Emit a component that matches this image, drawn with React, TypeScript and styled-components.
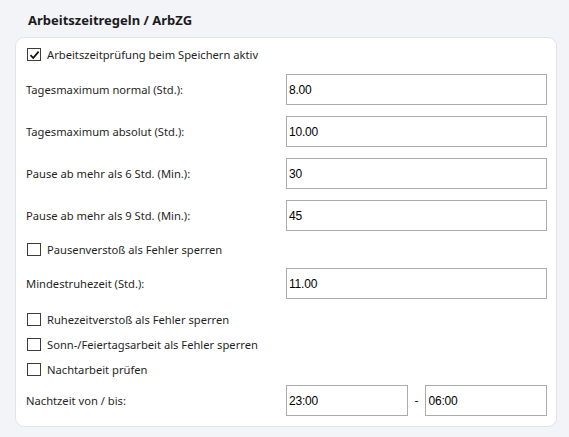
import React from "react";
import styled, { createGlobalStyle } from "styled-components";

const Global = createGlobalStyle`
  html, body { margin: 0; padding: 0; background: #f3f4f8; }
  body { font-family: "Noto Sans", "Open Sans", "Liberation Sans", sans-serif; color: #1a1a1a; }
  * { box-sizing: border-box; }
`;

const Page = styled.div`
  width: 569px;
  height: 437px;
  padding: 0 0 0 15px;
  display: flex;
  flex-direction: column;
`;

const Title = styled.h2`
  margin: 0;
  height: 37px;
  padding: 10px 0 0 13px;
  font-size: 13px;
  font-weight: 700;
  line-height: 20px;
  color: #1b1b1b;
`;

const Card = styled.div`
  width: 542px;
  height: 390px;
  background: #ffffff;
  border: 1px solid #e2e4ea;
  border-radius: 9px;
  padding: 4px 9px 0 10px;
  display: flex;
  flex-direction: column;
`;

const CheckRow = styled.label<{ $mt?: number }>`
  display: flex;
  align-items: center;
  gap: 6px;
  height: 25px;
  margin-top: ${(p) => p.$mt ?? 0}px;
  padding-left: 1px;
  font-size: 11.2px;
  color: #1f1f1f;
`;

const Box = styled.span`
  width: 14px;
  height: 13px;
  border: 1px solid #3c3c3c;
  background: #fff;
  display: flex;
  align-items: center;
  justify-content: center;
`;

const FieldRow = styled.div<{ $mt?: number }>`
  display: flex;
  align-items: center;
  height: 31px;
  margin-top: ${(p) => p.$mt ?? 0}px;
`;

const Label = styled.span`
  width: 260px;
  flex: none;
  font-size: 11.2px;
  color: #1f1f1f;
`;

const Input = styled.div<{ $w?: number }>`
  width: ${(p) => (p.$w ? `${p.$w}px` : "262px")};
  height: 31px;
  border: 1px solid #ababab;
  background: #fff;
  padding-left: 2px;
  display: flex;
  align-items: center;
  font-family: "Liberation Sans", Arial, sans-serif;
  font-size: 12px;
  letter-spacing: -0.2px;
  color: #000;
`;

const Dash = styled.span`
  width: 18px;
  text-align: center;
  font-size: 12px;
  color: #1f1f1f;
`;

const Check = ({ checked, label, mt }: { checked?: boolean; label: string; mt?: number }) => (
  <CheckRow $mt={mt}>
    <Box>
      {checked && (
        <svg width="11" height="10" viewBox="0 0 11 10">
          <path d="M1.5 5.2 L4.2 8 L9.6 1.6" fill="none" stroke="#111" strokeWidth="1.8" />
        </svg>
      )}
    </Box>
    {label}
  </CheckRow>
);

const Field = ({ label, value, mt }: { label: string; value: string; mt?: number }) => (
  <FieldRow $mt={mt}>
    <Label>{label}</Label>
    <Input>{value}</Input>
  </FieldRow>
);

export default function App() {
  return (
    <>
      <Global />
      <Page>
        <Title>Arbeitszeitregeln / ArbZG</Title>
        <Card>
          <Check checked label="Arbeitszeitprüfung beim Speichern aktiv" />
          <Field mt={7} label="Tagesmaximum normal (Std.):" value="8.00" />
          <Field mt={11} label="Tagesmaximum absolut (Std.):" value="10.00" />
          <Field mt={11} label="Pause ab mehr als 6 Std. (Min.):" value="30" />
          <Field mt={11} label="Pause ab mehr als 9 Std. (Min.):" value="45" />
          <Check mt={6} label="Pausenverstoß als Fehler sperren" />
          <Field mt={6} label="Mindestruhezeit (Std.):" value="11.00" />
          <Check mt={8} label="Ruhezeitverstoß als Fehler sperren" />
          <Check label="Sonn-/Feiertagsarbeit als Fehler sperren" />
          <Check label="Nachtarbeit prüfen" />
          <FieldRow $mt={3}>
            <Label>Nachtzeit von / bis:</Label>
            <Input $w={122}>23:00</Input>
            <Dash>-</Dash>
            <Input $w={122}>06:00</Input>
          </FieldRow>
        </Card>
      </Page>
    </>
  );
}
